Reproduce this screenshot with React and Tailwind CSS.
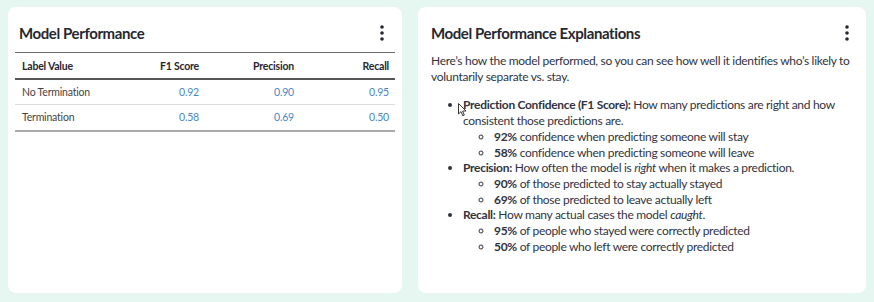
import React from 'react';

const font = { fontFamily: 'Lato, "Noto Sans", sans-serif' };

const Kebab = () => (
  <svg width="6" height="16" viewBox="0 0 6 16" className="text-[#262730]" fill="currentColor">
    <circle cx="3" cy="2" r="1.8" />
    <circle cx="3" cy="8" r="1.8" />
    <circle cx="3" cy="14" r="1.8" />
  </svg>
);

const rows = [
  { label: 'No Termination', f1: '0.92', precision: '0.90', recall: '0.95' },
  { label: 'Termination', f1: '0.58', precision: '0.69', recall: '0.50' },
];

const explanations = [
  {
    title: 'Prediction Confidence (F1 Score):',
    text: <> How many predictions are right and how consistent those predictions are.</>,
    items: [
      ['92%', ' confidence when predicting someone will stay'],
      ['58%', ' confidence when predicting someone will leave'],
    ],
  },
  {
    title: 'Precision:',
    text: <> How often the model is <em>right</em> when it makes a prediction.</>,
    items: [
      ['90%', ' of those predicted to stay actually stayed'],
      ['69%', ' of those predicted to leave actually left'],
    ],
  },
  {
    title: 'Recall:',
    text: <> How many actual cases the model <em>caught</em>.</>,
    items: [
      ['95%', ' of people who stayed were correctly predicted'],
      ['50%', ' of people who left were correctly predicted'],
    ],
  },
];

export default function App() {
  return (
    <div style={font} className="w-[874px] h-[302px] bg-[#e6f6f0] px-2 pt-[7px] pb-[9px] flex gap-4">
      {/* Model Performance */}
      <div className="w-[394px] bg-white rounded-lg">
        <div className="flex items-center justify-between pl-[11px] pr-[17px] pt-[11px] h-[41px]">
          <h2 className="text-[15px] font-bold text-[#262730] tracking-[-0.4px]">Model Performance</h2>
          <Kebab />
        </div>
        <table className="mx-[7px] w-[380px] mt-[4px] border-collapse text-[10.5px] tracking-[-0.2px] table-fixed">
          <thead>
            <tr className="border-t border-[#6b6b6b] border-b-2 border-b-[#555]">
              <th className="h-[26px] pt-[3px] px-[7px] text-left font-bold text-[#262730]">Label Value</th>
              <th className="pt-[3px] px-[6px] text-right font-bold text-[#262730]">F1 Score</th>
              <th className="pt-[3px] px-[6px] text-right font-bold text-[#262730]">Precision</th>
              <th className="pt-[3px] px-[6px] text-right font-bold text-[#262730]">Recall</th>
            </tr>
          </thead>
          <tbody>
            {rows.map((r, i) => (
              <tr key={r.label} className={i === 0 ? 'border-b border-[#dcdcdc]' : 'border-b-2 border-[#aaaaaa]'}>
                <td className="h-[26px] pt-[2px] px-[7px] text-[#444]">{r.label}</td>
                <td className="pt-[2px] px-[6px] text-right text-[#4a86c5]">{r.f1}</td>
                <td className="pt-[2px] px-[6px] text-right text-[#4a86c5]">{r.precision}</td>
                <td className="pt-[2px] px-[6px] text-right text-[#4a86c5]">{r.recall}</td>
              </tr>
            ))}
          </tbody>
        </table>
      </div>

      {/* Explanations */}
      <div className="flex-1 bg-white rounded-lg relative">
        <div className="flex items-center justify-between pl-[13px] pr-[16px] pt-[11px] h-[41px]">
          <h2 className="text-[15px] font-bold text-[#262730] tracking-[-0.4px]">Model Performance Explanations</h2>
          <Kebab />
        </div>
        <div className="pl-[13px] pr-[8px] pt-[5px] text-[12px] tracking-[-0.3px] leading-[15.7px] text-[#31333f]">
          <p>Here’s how the model performed, so you can see how well it identifies who’s likely to voluntarily separate vs. stay.</p>
          <ul className="list-disc pl-[32px] mt-[13px]">
            {explanations.map((e) => (
              <li key={e.title}>
                <strong className="font-bold">{e.title}</strong>
                {e.text}
                <ul className="list-[circle] pl-[31px]">
                  {e.items.map(([pct, rest]) => (
                    <li key={pct}>
                      <strong className="font-bold">{pct}</strong>
                      {rest}
                    </li>
                  ))}
                </ul>
              </li>
            ))}
          </ul>
        </div>
        {/* mouse pointer */}
        <svg className="absolute left-[40px] top-[96px]" width="9" height="14" viewBox="0 0 9 14">
          <path d="M0.5 0.5 L0.5 11 L3 8.6 L4.8 12.8 L6.3 12.1 L4.6 8 L8 8 Z" fill="#fff" stroke="#222" strokeWidth="0.9" strokeLinejoin="round" />
        </svg>
      </div>
    </div>
  );
}
